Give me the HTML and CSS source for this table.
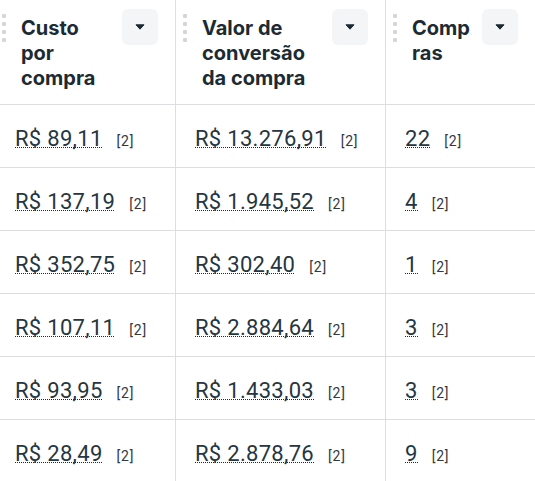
FILE: index.html
```html
<!DOCTYPE html>
<html lang="pt-BR">
<head>
<meta charset="utf-8">
<title>Tabela</title>
<link rel="stylesheet" href="styles.css">
</head>
<body>
<div class="grid">
  <div class="hcell first">
    <span class="handle"><i></i><i></i><i></i><i></i></span>
    <span class="title">Custo por compra</span>
    <span class="sortbtn"><svg width="10" height="6" viewBox="0 0 10 6"><path d="M1 0.8 H9 L5 5.2 Z" fill="#1c2b33" stroke="#1c2b33" stroke-width="1" stroke-linejoin="round"/></svg></span>
  </div>
  <div class="hcell">
    <span class="handle"><i></i><i></i><i></i><i></i></span>
    <span class="title">Valor de conversão da compra</span>
    <span class="sortbtn"><svg width="10" height="6" viewBox="0 0 10 6"><path d="M1 0.8 H9 L5 5.2 Z" fill="#1c2b33" stroke="#1c2b33" stroke-width="1" stroke-linejoin="round"/></svg></span>
  </div>
  <div class="hcell">
    <span class="handle"><i></i><i></i><i></i><i></i></span>
    <span class="title">Compras</span>
    <span class="sortbtn"><svg width="10" height="6" viewBox="0 0 10 6"><path d="M1 0.8 H9 L5 5.2 Z" fill="#1c2b33" stroke="#1c2b33" stroke-width="1" stroke-linejoin="round"/></svg></span>
  </div>

  <div class="cell first"><span class="val">R$ 89,11</span><span class="ref">[2]</span></div>
  <div class="cell"><span class="val">R$ 13.276,91</span><span class="ref">[2]</span></div>
  <div class="cell"><span class="val">22</span><span class="ref">[2]</span></div>

  <div class="cell first"><span class="val">R$ 137,19</span><span class="ref">[2]</span></div>
  <div class="cell"><span class="val">R$ 1.945,52</span><span class="ref">[2]</span></div>
  <div class="cell"><span class="val">4</span><span class="ref">[2]</span></div>

  <div class="cell first"><span class="val">R$ 352,75</span><span class="ref">[2]</span></div>
  <div class="cell"><span class="val">R$ 302,40</span><span class="ref">[2]</span></div>
  <div class="cell"><span class="val">1</span><span class="ref">[2]</span></div>

  <div class="cell first"><span class="val">R$ 107,11</span><span class="ref">[2]</span></div>
  <div class="cell"><span class="val">R$ 2.884,64</span><span class="ref">[2]</span></div>
  <div class="cell"><span class="val">3</span><span class="ref">[2]</span></div>

  <div class="cell first"><span class="val">R$ 93,95</span><span class="ref">[2]</span></div>
  <div class="cell"><span class="val">R$ 1.433,03</span><span class="ref">[2]</span></div>
  <div class="cell"><span class="val">3</span><span class="ref">[2]</span></div>

  <div class="cell first"><span class="val">R$ 28,49</span><span class="ref">[2]</span></div>
  <div class="cell"><span class="val">R$ 2.878,76</span><span class="ref">[2]</span></div>
  <div class="cell"><span class="val">9</span><span class="ref">[2]</span></div>
</div>
</body>
</html>
```
FILE: styles.css
```css
html, body {
  margin: 0;
  padding: 0;
  overflow: hidden;
  background: #ffffff;
}

body {
  font-family: Roboto, "Liberation Sans", sans-serif;
  color: #1c2b33;
}

.grid {
  display: grid;
  grid-template-columns: 181px 210px 150px;
  grid-template-rows: 105px repeat(6, 63px);
  margin-left: -5px;
}

.hcell,
.cell {
  box-sizing: border-box;
  border-right: 1px solid #dcdfe2;
  border-bottom: 1px solid #dcdfe2;
}

.hcell {
  display: flex;
  align-items: flex-start;
  padding: 9px 17px 0 7px;
}

.handle {
  display: flex;
  flex-direction: column;
  gap: 4px;
  margin-top: 5px;
  flex-shrink: 0;
}

.handle i {
  display: block;
  width: 4px;
  height: 4px;
  border-radius: 1px;
  background: #d3d6da;
}

.title {
  flex: 1;
  min-width: 0;
  margin: 7px 10px 0 15px;
  font-family: Inter, "Noto Sans", sans-serif;
  font-weight: 700;
  font-size: 20px;
  line-height: 25px;
  overflow-wrap: anywhere;
  color: #1c2b33;
}

.sortbtn {
  flex-shrink: 0;
  width: 36px;
  height: 36px;
  border-radius: 6px;
  background: #f4f5f6;
  display: flex;
  align-items: center;
  justify-content: center;
}

.cell {
  display: flex;
  align-items: baseline;
  padding: 21px 0 0 19px;
}

.cell.first {
  padding-left: 20px;
}

.val {
  font-size: 22px;
  letter-spacing: 0.3px;
  color: #253640;
  background-image: linear-gradient(to right, #1c2b33 50%, transparent 50%);
  background-size: 2px 1px;
  background-repeat: repeat-x;
  background-position: 0 calc(100% - 3px);
}

.ref {
  margin-left: 14px;
  font-size: 14px;
  letter-spacing: 0.8px;
  color: #33393f;
}
```
